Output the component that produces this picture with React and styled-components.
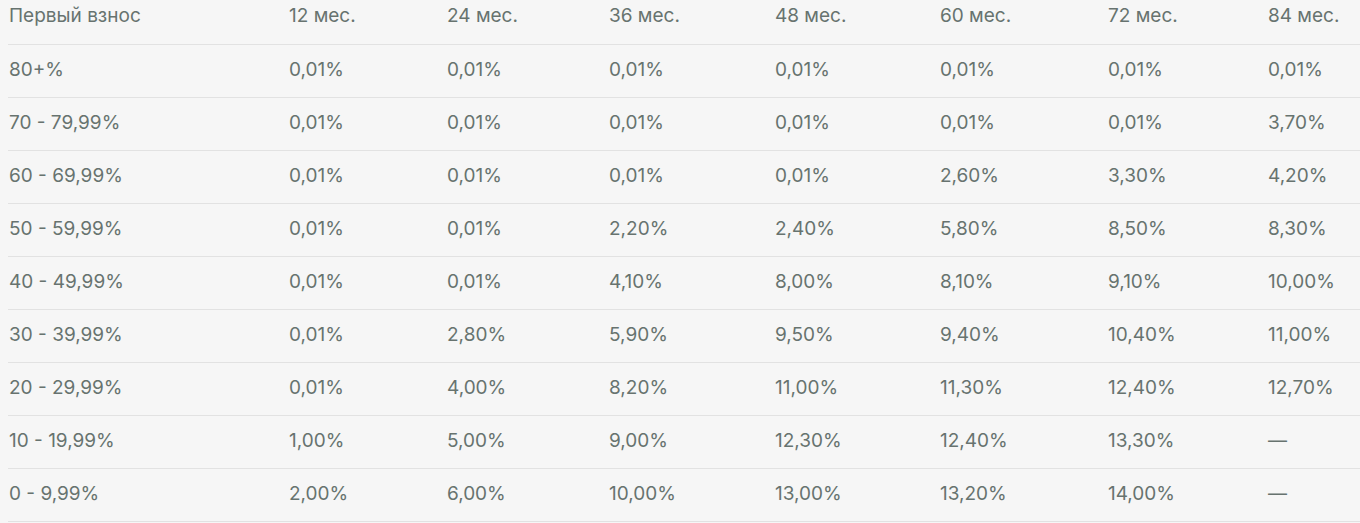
import React from "react";
import styled, { createGlobalStyle } from "styled-components";

const GlobalStyle = createGlobalStyle`
  html, body {
    margin: 0;
    padding: 0;
    background: #f6f6f6;
  }
  body {
    font-family: Inter, "Noto Sans", sans-serif;
  }
`;

const Wrapper = styled.div`
  padding-left: 8px;
`;

const Table = styled.div`
  display: grid;
  grid-template-columns: 280px 158px 162px 166px 165px 168px 160px 1fr;
  color: #67736f;
  font-size: 19px;
  line-height: 24px;
`;

const Row = styled.div`
  display: contents;
`;

// header row is 45px, body rows 53px, each with its 1px rule
const Cell = styled.div`
  display: flex;
  align-items: center;
  padding-left: 1px;
  white-space: nowrap;
  box-sizing: border-box;
  border-bottom: 1px solid #e2e2e2;
  height: ${(props) => (props.head ? "45px" : "53px")};
  padding-bottom: ${(props) => (props.head ? "12px" : "2px")};
`;

const head = ["Первый взнос", "12 мес.", "24 мес.", "36 мес.", "48 мес.", "60 мес.", "72 мес.", "84 мес."];

const rows = [
  ["80+%", "0,01%", "0,01%", "0,01%", "0,01%", "0,01%", "0,01%", "0,01%"],
  ["70 - 79,99%", "0,01%", "0,01%", "0,01%", "0,01%", "0,01%", "0,01%", "3,70%"],
  ["60 - 69,99%", "0,01%", "0,01%", "0,01%", "0,01%", "2,60%", "3,30%", "4,20%"],
  ["50 - 59,99%", "0,01%", "0,01%", "2,20%", "2,40%", "5,80%", "8,50%", "8,30%"],
  ["40 - 49,99%", "0,01%", "0,01%", "4,10%", "8,00%", "8,10%", "9,10%", "10,00%"],
  ["30 - 39,99%", "0,01%", "2,80%", "5,90%", "9,50%", "9,40%", "10,40%", "11,00%"],
  ["20 - 29,99%", "0,01%", "4,00%", "8,20%", "11,00%", "11,30%", "12,40%", "12,70%"],
  ["10 - 19,99%", "1,00%", "5,00%", "9,00%", "12,30%", "12,40%", "13,30%", "—"],
  ["0 - 9,99%", "2,00%", "6,00%", "10,00%", "13,00%", "13,20%", "14,00%", "—"],
];

export default function App() {
  return (
    <Wrapper>
      <GlobalStyle />
      <Table>
        <Row>
          {head.map((h, i) => (
            <Cell head key={i}>{h}</Cell>
          ))}
        </Row>
        {rows.map((r, ri) => (
          <Row key={ri}>
            {r.map((v, ci) => (
              <Cell key={ci}>{v}</Cell>
            ))}
          </Row>
        ))}
      </Table>
    </Wrapper>
  );
}
